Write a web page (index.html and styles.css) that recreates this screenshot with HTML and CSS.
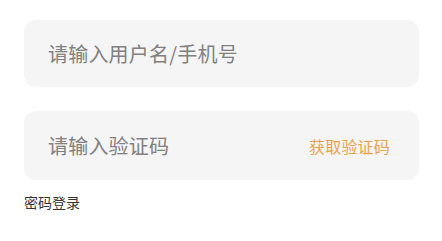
FILE: index.html
```html
<!DOCTYPE html>
<html lang="zh">
<head>
<meta charset="utf-8">
<link rel="stylesheet" href="styles.css">
</head>
<body>
<div class="form">
  <div class="field field-user">
    <span class="placeholder">请输入用户名/手机号</span>
  </div>
  <div class="field field-code">
    <span class="placeholder">请输入验证码</span>
    <span class="get-code">获取验证码</span>
  </div>
  <div class="switch">密码登录</div>
</div>
</body>
</html>
```
FILE: styles.css
```css
html, body {
  margin: 0;
  padding: 0;
  background: #ffffff;
  font-family: "Noto Sans CJK SC", "Noto Sans", sans-serif;
}
.form {
  width: 395px;
  padding: 20px 0 0 24px;
  display: flex;
  flex-direction: column;
}
.field {
  background: #f5f5f5;
  border-radius: 12px;
  display: flex;
  align-items: center;
  justify-content: space-between;
  padding: 0 29px 0 24px;
}
.field-user {
  height: 67px;
}
.field-code {
  height: 69px;
  margin-top: 24px;
}
.placeholder {
  font-size: 20px;
  letter-spacing: 0.2px;
  color: #808080;
  line-height: 1;
}
.get-code {
  font-size: 16px;
  letter-spacing: 0.2px;
  color: #e9a24c;
  line-height: 1;
}
.switch {
  margin-top: 12px;
  font-size: 14px;
  color: #333333;
  line-height: 20px;
}
```
